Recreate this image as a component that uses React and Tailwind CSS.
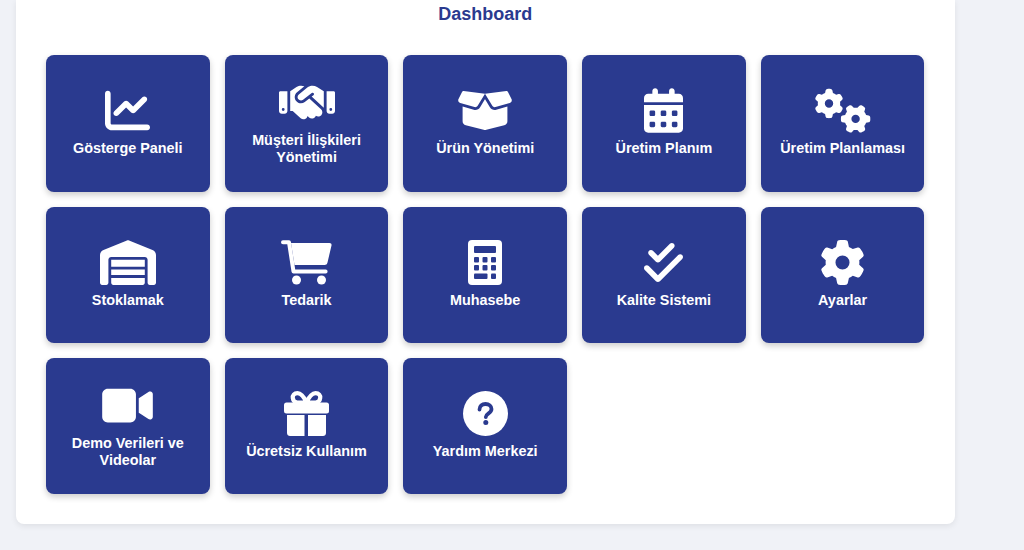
import {
  FaChartLine,
  FaHandshake,
  FaBoxOpen,
  FaCalendarDays,
  FaGears,
  FaWarehouse,
  FaCheckDouble,
  FaGear,
  FaVideo,
} from "react-icons/fa6";

const CartIcon = ({ className }) => (
  <svg viewBox="0 0 51 45" className={className} fill="none">
    <path d="M2 2.2H8L12.5 31.5H44.6" stroke="currentColor" strokeWidth="4" strokeLinecap="round" strokeLinejoin="round" />
    <path d="M10 3H48.5C50 3 50.8 4 50.5 5.5L46.5 22.5C46.2 24.2 45 25 43.5 25H13.5Z" fill="currentColor" />
    <circle cx="15.5" cy="40" r="4.5" fill="currentColor" />
    <circle cx="40.5" cy="40" r="4.5" fill="currentColor" />
  </svg>
);

const CalculatorIcon = ({ className }) => (
  <svg viewBox="0 0 34 45" className={className}>
    <rect width="34" height="45" rx="4" fill="currentColor" />
    <g fill="#2a3a8f">
      <rect x="6" y="6" width="22" height="7" rx="1" />
      <rect x="6" y="17" width="5" height="5.5" rx="1" />
      <rect x="14.5" y="17" width="5" height="5.5" rx="1" />
      <rect x="23" y="17" width="5" height="5.5" rx="1" />
      <rect x="6" y="25" width="5" height="5.5" rx="1" />
      <rect x="14.5" y="25" width="5" height="5.5" rx="1" />
      <rect x="23" y="25" width="5" height="5.5" rx="1" />
      <rect x="6" y="33.5" width="13.5" height="5.5" rx="1" />
      <rect x="23" y="33.5" width="5" height="5.5" rx="1" />
    </g>
  </svg>
);

const GiftIcon = ({ className }) => (
  <svg viewBox="0 0 45 45" className={className} fill="none">
    <path
      d="M22.5 11.5C19.5 5 16.5 2.2 13.5 2.2C10 2.2 8.5 4.5 8.8 7C9 9.5 11 11.5 13.5 11.5H31.5C34 11.5 36 9.5 36.2 7C36.5 4.5 35 2.2 31.5 2.2C28.5 2.2 25.5 5 22.5 11.5Z"
      stroke="currentColor"
      strokeWidth="4.2"
    />
    <rect y="11.5" width="45" height="11" rx="2.5" fill="currentColor" />
    <path d="M3 24H20.5V45H6C4.3 45 3 43.7 3 42Z" fill="currentColor" />
    <path d="M24 24H42V42C42 43.7 40.7 45 39 45H24Z" fill="currentColor" />
  </svg>
);

const QuestionIcon = ({ className }) => (
  <svg viewBox="0 0 45 45" className={className}>
    <circle cx="22.5" cy="22.5" r="22.5" fill="currentColor" />
    <path
      d="M16.5 18.5C16.5 15 19 13 22.5 13C26 13 28.5 15 28.5 18C28.5 20.3 27 21.5 25.3 22.6C23.8 23.6 22.8 24.3 22.8 26"
      fill="none"
      stroke="#2a3a8f"
      strokeWidth="3.8"
      strokeLinecap="round"
    />
    <circle cx="22.8" cy="31.5" r="2.5" fill="#2a3a8f" />
  </svg>
);

const modules = [
  { label: "Gösterge Paneli", icon: FaChartLine, size: "w-[45px]" },
  { label: "Müşteri İlişkileri Yönetimi", icon: FaHandshake, size: "w-[56px]" },
  { label: "Ürün Yönetimi", icon: FaBoxOpen, size: "w-[56px]" },
  { label: "Üretim Planım", icon: FaCalendarDays, size: "w-[39px]" },
  { label: "Üretim Planlaması", icon: FaGears, size: "w-[56px]" },
  { label: "Stoklamak", icon: FaWarehouse, size: "w-[56px]" },
  { label: "Tedarik", icon: CartIcon, size: "w-[51px]" },
  { label: "Muhasebe", icon: CalculatorIcon, size: "w-[34px]" },
  { label: "Kalite Sistemi", icon: FaCheckDouble, size: "w-[39px]" },
  { label: "Ayarlar", icon: FaGear, size: "w-[45px]" },
  { label: "Demo Verileri ve Videolar", icon: FaVideo, size: "w-[51px]" },
  { label: "Ücretsiz Kullanım", icon: GiftIcon, size: "w-[45px]" },
  { label: "Yardım Merkezi", icon: QuestionIcon, size: "w-[45px]" },
];

export default function App() {
  return (
    <div className="h-[550px] overflow-hidden bg-[#f0f2f7] pl-4 font-['Liberation_Sans',Arial,sans-serif]">
      <div className="w-[939px] rounded-b-lg bg-white pr-[30.6px] pl-[30px] pb-[30px] pt-[3.3px] shadow-[0_2px_6px_rgba(0,0,0,0.08)]">
        <h1 className="mb-[30px] h-[22px] text-center text-lg leading-[22px] font-bold text-[#2a3a8f]">
          Dashboard
        </h1>
        <div className="grid grid-cols-5 gap-[15px]">
          {modules.map(({ label, icon: Icon, size }) => (
            <div
              key={label}
              className="flex h-[136.3px] flex-col items-center justify-center gap-[7px] rounded-lg bg-[#2a3a8f] px-4 pb-px text-center text-white shadow-[0_3px_6px_rgba(0,0,0,0.2)]"
            >
              <Icon className={`h-[45px] ${size}`} />
              <span className="text-[14.4px] leading-[17px] font-bold">{label}</span>
            </div>
          ))}
        </div>
      </div>
    </div>
  );
}
